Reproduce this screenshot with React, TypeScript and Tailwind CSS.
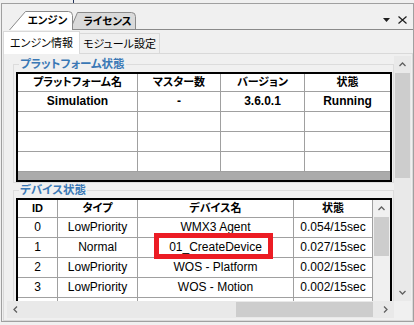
import React from "react";

type Dir = "up" | "down" | "left" | "right";

const Chevron = ({ dir }: { dir: Dir }) => {
  const vertical = dir === "up" || dir === "down";
  const d = {
    up: "M0.5 4 L3.5 1 L6.5 4",
    down: "M0.5 1 L3.5 4 L6.5 1",
    left: "M4 0.5 L1 3.5 L4 6.5",
    right: "M1 0.5 L4 3.5 L1 6.5",
  }[dir];
  return (
    <svg
      width={vertical ? 7 : 5}
      height={vertical ? 5 : 7}
      viewBox={vertical ? "0 0 7 5" : "0 0 5 7"}
    >
      <path d={d} fill="none" stroke="#606060" strokeWidth="1.3" />
    </svg>
  );
};

const platformCols = [
  "w-[120px] border-r",
  "w-[83px] border-r",
  "w-[84px] border-r",
  "w-[85px]",
];

const deviceCols = [
  "w-[40px] border-r",
  "w-[80px] border-r",
  "w-[156px] border-r",
  "w-[79px] border-r",
];

const platformRows = [
  ["Simulation", "-", "3.6.0.1", "Running"],
  ["", "", "", ""],
  ["", "", "", ""],
  ["", "", "", ""],
];

const deviceRows = [
  ["0", "LowPriority", "WMX3 Agent", "0.054/15sec"],
  ["1", "Normal", "01_CreateDevice", "0.027/15sec"],
  ["2", "LowPriority", "WOS - Platform", "0.002/15sec"],
  ["3", "LowPriority", "WOS - Motion", "0.002/15sec"],
  ["", "", "", ""],
];

const Row = ({
  cols,
  cells,
  header,
  bold,
}: {
  cols: string[];
  cells: string[];
  header?: boolean;
  bold?: boolean;
}) => (
  <div
    className={`flex border-b border-[#a0a0a0] bg-white ${
      header ? "h-[18px]" : "h-[20px]"
    }`}
  >
    {cells.map((c, i) => (
      <div
        key={i}
        className={`flex h-full items-center justify-center whitespace-nowrap border-[#a0a0a0] leading-[15px] text-black ${
          cols[i]
        } ${header ? "text-[11px] font-bold" : "text-[12px]"} ${bold ? "font-bold" : ""}`}
      >
        {c}
      </div>
    ))}
  </div>
);

export default function App() {
  return (
    <div className="relative h-[325px] w-[414px] overflow-hidden bg-[#f0f0f0] font-['Liberation_Sans','Noto_Sans_CJK_JP',sans-serif] [font-feature-settings:'palt']">
      {/* strip above the pane */}
      <div className="flex h-[3px]">
        <div className="ml-[73px] h-[3px] w-px bg-[#24345c]" />
      </div>

      {/* docking pane */}
      <div className="ml-px flex h-[319px] w-[413px] flex-col border border-[#a0a0a0]">
        {/* outer tabs */}
        <div className="flex h-[26px] items-end">
          <div className="relative z-10 ml-[6px] flex h-[19px] w-[65px] items-center justify-center pl-[14px]">
            <svg className="absolute inset-0" width="65" height="19" viewBox="0 0 65 19">
              <path
                d="M1.5 19 L17.5 0.5 H60.5 Q64.5 0.5 64.5 4.5 V19"
                fill="#ffffff"
                stroke="#8a8a8a"
              />
            </svg>
            <span className="relative whitespace-nowrap text-[10.5px] font-bold leading-none text-black">
              エンジン
            </span>
          </div>
          <div className="relative -ml-[3px] flex h-[18px] w-[66px] items-center justify-center pl-[9px]">
            <svg className="absolute inset-0" width="66" height="18" viewBox="0 0 66 18">
              <path
                d="M0 18 L7.5 0.5 H61.5 Q65.5 0.5 65.5 4.5 V17.5"
                fill="#dadada"
                stroke="#8a8a8a"
              />
              <path d="M0 17.5 H66" stroke="#8a8a8a" />
            </svg>
            <span className="relative whitespace-nowrap text-[10.5px] font-bold leading-none text-black">
              ライセンス
            </span>
          </div>
          <div className="flex h-full flex-1 items-start justify-end gap-[8px] border-b border-[#8a8a8a] pr-[6px] pt-[12px]">
            <svg className="mt-[2px]" width="7" height="4" viewBox="0 0 7 4">
              <path d="M0 0 H7 L3.5 4 Z" fill="#1e1e1e" />
            </svg>
            <svg width="9" height="8" viewBox="0 0 9 8">
              <path d="M0.5 0.5 L8.5 7.5 M8.5 0.5 L0.5 7.5" stroke="#1e1e1e" strokeWidth="1.2" />
            </svg>
          </div>
        </div>

        {/* inner tabs */}
        <div className="relative z-10 flex h-[23px] items-end pl-px">
          <div className="-mb-px flex h-[23px] w-[77px] items-center justify-center whitespace-nowrap border-x border-t border-[#d9d9d9] bg-white text-[11px] text-black">
            エンジン情報
          </div>
          <div className="-ml-px flex h-[20px] w-[81px] items-center justify-center whitespace-nowrap border-x border-t border-[#d9d9d9] bg-[#f0f0f0] pt-[2px] text-[11px] text-black">
            モジュール設定
          </div>
        </div>

        {/* tab page */}
        <div className="ml-px flex h-[268px] w-[410px] flex-col border border-[#d9d9d9] pl-[3px] pt-[2px]">
          <div className="flex h-[245px]">
            {/* scrolled content */}
            <div className="h-[245px] w-[387px] overflow-hidden">
              <fieldset className="ml-[6px] w-[381px] border border-[#dcdcdc] pl-[2px] pr-px">
                <legend className="ml-[3px] whitespace-nowrap px-px text-[11.5px] font-bold leading-[16px] text-[#3a78b5]">
                  プラットフォーム状態
                </legend>
                <div className="w-[376px] border-2 border-black bg-[#ababab]">
                  <Row
                    header
                    cols={platformCols}
                    cells={["プラットフォーム名", "マスター数", "バージョン", "状態"]}
                  />
                  {platformRows.map((r, i) => (
                    <Row key={i} bold cols={platformCols} cells={r} />
                  ))}
                  <div className="h-[8px]" />
                </div>
              </fieldset>

              <fieldset className="ml-[6px] w-[381px] border border-[#dcdcdc] pl-[2px] pr-px">
                <legend className="ml-[3px] whitespace-nowrap px-px text-[11.5px] font-bold leading-[15px] text-[#3a78b5]">
                  デバイス状態
                </legend>
                <div className="flex w-[376px] border-2 border-black bg-white">
                  <div className="w-[355px]">
                    <Row header cols={deviceCols} cells={["ID", "タイプ", "デバイス名", "状態"]} />
                    {deviceRows.map((r, i) => (
                      <Row key={i} cols={deviceCols} cells={r} />
                    ))}
                  </div>
                  <div className="flex w-[17px] flex-col bg-[#f0f0f0]">
                    <div className="flex h-[17px] items-center justify-center">
                      <Chevron dir="up" />
                    </div>
                    <div className="mx-px h-[39px] bg-[#cdcdcd]" />
                  </div>
                </div>
              </fieldset>
            </div>

            {/* vertical scrollbar */}
            <div className="flex w-[17px] flex-col bg-[#e9e9e9]">
              <div className="flex h-[17px] items-center justify-center">
                <Chevron dir="up" />
              </div>
              <div className="mx-px h-[105px] bg-[#cdcdcd]" />
              <div className="flex-1" />
              <div className="flex h-[17px] items-center justify-center">
                <Chevron dir="down" />
              </div>
            </div>
          </div>

          {/* horizontal scrollbar */}
          <div className="flex h-[17px]">
            <div className="flex w-[387px] bg-[#e9e9e9]">
              <div className="flex w-[17px] items-center justify-center">
                <Chevron dir="left" />
              </div>
              <div className="flex flex-1 items-center pl-[212px]">
                <div className="h-[15px] w-[137px] bg-[#cdcdcd]" />
              </div>
              <div className="flex w-[17px] items-center justify-center">
                <Chevron dir="right" />
              </div>
            </div>
            <div className="w-[17px] bg-[#f0f0f0]" />
          </div>
        </div>
      </div>

      {/* annotation */}
      <div className="absolute left-[154px] top-[233px] h-[26px] w-[119px] border-[5px] border-[#ec1c24]" />
    </div>
  );
}
